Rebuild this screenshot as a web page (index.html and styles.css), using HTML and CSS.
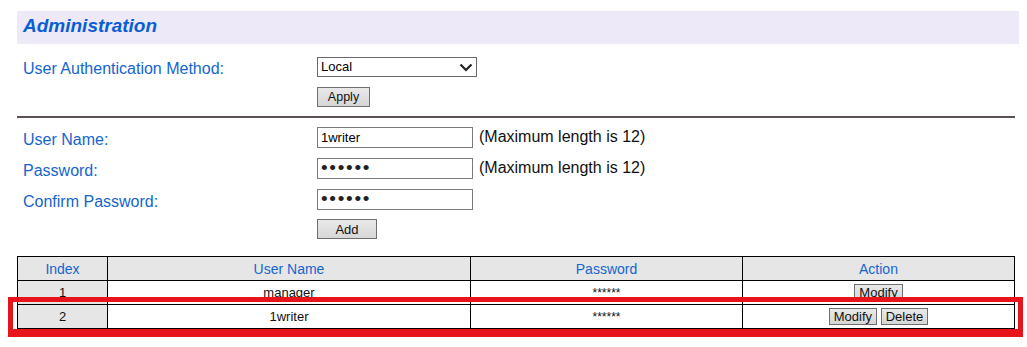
FILE: index.html
```html
<!DOCTYPE html>
<html lang="en">
<head>
  <meta charset="UTF-8">
  <title>Administration</title>
  <link rel="stylesheet" href="styles.css">
</head>
<body>
  <div class="page">
    <div class="title-bar">Administration</div>

    <div class="form-grid auth">
      <label class="field-label" for="method">User Authentication Method:</label>
      <div class="field">
        <div class="select-wrap">
          <select id="method" class="select">
            <option>Local</option>
            <option>RADIUS</option>
          </select>
          <svg class="chevron" width="14" height="9" viewBox="0 0 14 9">
            <path d="M1.5 1.5 L7 7 L12.5 1.5" fill="none" stroke="#222" stroke-width="2.2"/>
          </svg>
        </div>
      </div>
      <div></div>
      <div class="field"><button type="button" class="btn btn-apply">Apply</button></div>
    </div>

    <hr class="divider">

    <div class="form-grid users">
      <label class="field-label" for="uname">User Name:</label>
      <div class="field">
        <input type="text" id="uname" class="text-input" value="1writer">
        <span class="hint">(Maximum length is 12)</span>
      </div>

      <label class="field-label" for="pwd">Password:</label>
      <div class="field">
        <input type="password" id="pwd" class="text-input pwd-input" value="******">
        <span class="hint">(Maximum length is 12)</span>
      </div>

      <label class="field-label" for="pwd2">Confirm Password:</label>
      <div class="field">
        <input type="password" id="pwd2" class="text-input pwd-input" value="******">
      </div>

      <div></div>
      <div class="field"><button type="button" class="btn btn-add">Add</button></div>
    </div>

    <div class="table-wrap">
      <table class="user-table">
        <tr>
          <th class="col-index">Index</th>
          <th class="col-name">User Name</th>
          <th class="col-pwd">Password</th>
          <th>Action</th>
        </tr>
        <tr>
          <td class="idx">1</td>
          <td>manager</td>
          <td class="stars">******</td>
          <td><button type="button" class="btn btn-small">Modify</button></td>
        </tr>
        <tr>
          <td class="idx">2</td>
          <td>1writer</td>
          <td class="stars">******</td>
          <td>
            <button type="button" class="btn btn-small">Modify</button>
            <button type="button" class="btn btn-small">Delete</button>
          </td>
        </tr>
      </table>
      <div class="highlight"></div>
    </div>
  </div>
</body>
</html>
```

FILE: styles.css
```css
* {
  margin: 0;
  padding: 0;
  box-sizing: border-box;
}

body {
  background-color: #fff;
  font-family: "Liberation Sans", Arial, sans-serif;
  color: #111;
}

.page {
  padding: 11px 8px 19px 17px;
  width: 1027px;
}

.title-bar {
  height: 33px;
  width: 1002px;
  padding: 4px 0 0 6px;
  background-color: #ede9f8;
  color: #0b5dd3;
  font-size: 19px;
  font-weight: bold;
  font-style: italic;
}

.form-grid {
  display: grid;
  grid-template-columns: 294px 1fr;
  padding-left: 6px;
  row-gap: 9px;
}

.auth {
  margin-top: 12px;
  row-gap: 10px;
}

.field-label {
  color: #1565d0;
  font-size: 16px;
  padding-top: 5px;
  line-height: 16px;
}

.field {
  display: flex;
  align-items: center;
  gap: 6px;
}

.select-wrap {
  position: relative;
  width: 160px;
  height: 20px;
}

.select {
  appearance: none;
  width: 160px;
  height: 20px;
  border: 1px solid #6a6a6a;
  background-color: #fff;
  font-family: "Liberation Sans", Arial, sans-serif;
  font-size: 13px;
  padding-left: 3px;
  color: #000;
}

.chevron {
  position: absolute;
  right: 4px;
  top: 6px;
  pointer-events: none;
}

.btn {
  background: linear-gradient(#e9e9e9, #d6d6d6);
  border: 1px solid #6f6f6f;
  font-family: "Liberation Sans", Arial, sans-serif;
  color: #111;
  cursor: pointer;
}

.btn-apply {
  width: 53px;
  height: 20px;
  font-size: 12.5px;
}

.btn-add {
  width: 60px;
  height: 20px;
  font-size: 13px;
}

.divider {
  border: none;
  border-top: 2px solid #5a5055;
  width: 998px;
  margin: 9px 0 8px;
}

.users .field-label {
  padding-top: 6px;
}

.text-input {
  width: 156px;
  height: 21px;
  border: 1px solid #7a7a7a;
  font-family: "Liberation Sans", Arial, sans-serif;
  font-size: 13px;
  padding-left: 3px;
  color: #000;
}

.pwd-input {
  font-size: 19px;
  letter-spacing: 1.7px;
  color: #222;
}

.hint {
  font-size: 16px;
  color: #111;
}

.table-wrap {
  position: relative;
  margin-top: 17px;
}

.user-table {
  border-collapse: collapse;
  width: 998px;
  font-size: 13px;
}

.user-table th,
.user-table td {
  border: 1px solid #000;
  height: 24px;
  text-align: center;
  font-weight: normal;
}

.user-table th {
  background-color: #e6e6e6;
  color: #1565d0;
  font-size: 14px;
}

.col-index { width: 90px; }
.col-name { width: 363px; }
.col-pwd { width: 272px; }

.user-table td.idx {
  background-color: #e6e6e6;
}

.stars {
  font-size: 12px;
}

.btn-small {
  font-size: 13px;
  height: 17px;
  padding: 0 4px;
}

.highlight {
  position: absolute;
  left: -9px;
  top: 41px;
  width: 1015px;
  height: 40px;
  border: 5px solid #e8141c;
  border-bottom-width: 8px;
}
```
